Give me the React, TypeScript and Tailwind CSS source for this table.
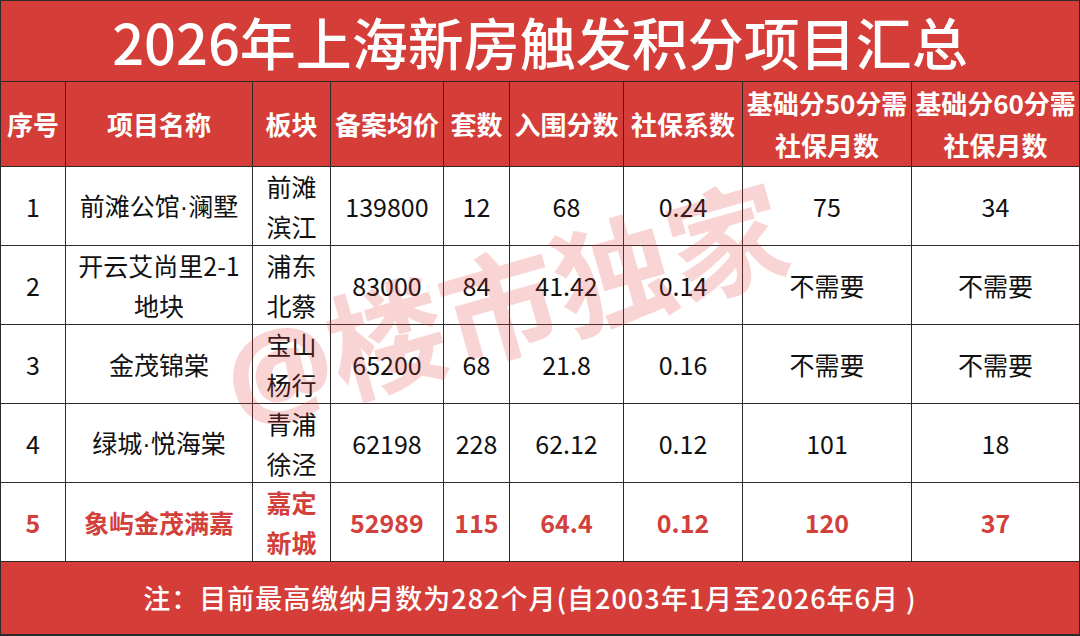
import React from 'react'

type Row = {
  no: string
  name: React.ReactNode
  area: React.ReactNode
  price: string
  units: string
  score: string
  coef: string
  m50: string
  m60: string
  highlight?: boolean
}

// narrow middle dot, the CJK font draws it full width
const Dot = () => <span className="font-['Liberation_Sans',sans-serif]">·</span>

const rows: Row[] = [
  { no: '1', name: <>前滩公馆<Dot />澜墅</>, area: <>前滩<br />滨江</>, price: '139800', units: '12', score: '68', coef: '0.24', m50: '75', m60: '34' },
  { no: '2', name: <>开云艾尚里2-1<br />地块</>, area: <>浦东<br />北蔡</>, price: '83000', units: '84', score: '41.42', coef: '0.14', m50: '不需要', m60: '不需要' },
  { no: '3', name: '金茂锦棠', area: <>宝山<br />杨行</>, price: '65200', units: '68', score: '21.8', coef: '0.16', m50: '不需要', m60: '不需要' },
  { no: '4', name: <>绿城<Dot />悦海棠</>, area: <>青浦<br />徐泾</>, price: '62198', units: '228', score: '62.12', coef: '0.12', m50: '101', m60: '18' },
  { no: '5', name: '象屿金茂满嘉', area: <>嘉定<br />新城</>, price: '52989', units: '115', score: '64.4', coef: '0.12', m50: '120', m60: '37', highlight: true },
]

const headers: React.ReactNode[] = [
  '序号',
  '项目名称',
  '板块',
  '备案均价',
  '套数',
  '入围分数',
  '社保系数',
  <>基础分50分需<br />社保月数</>,
  <>基础分60分需<br />社保月数</>,
]

function Cell({ children, highlight }: { children: React.ReactNode; highlight?: boolean }) {
  return (
    <div
      className={
        highlight
          ? 'bg-white flex items-center justify-center text-center leading-[40px] text-[25px] font-bold text-[#d2403b]'
          : 'bg-white flex items-center justify-center text-center leading-[40px] text-[25px] text-[#111]'
      }
    >
      <span>{children}</span>
    </div>
  )
}

export default function App() {
  return (
    <div className="relative w-[1080px] h-[636px] overflow-hidden font-['Noto_Sans_CJK_SC','Noto_Sans',sans-serif]">
      <div className="grid h-full bg-[#2e2a2a] p-px gap-px grid-cols-[64px_186px_77px_112px_65px_113px_118px_168px_167px] grid-rows-[80px_84px_78px_78px_78px_78px_78px_72px]">
        {/* Title */}
        <div className="col-span-9 bg-[#d43d38] flex items-center justify-center text-white text-[56px] font-medium leading-[64px]">
          2026年上海新房触发积分项目汇总
        </div>

        {/* Header row */}
        {headers.map((h, i) => (
          <div
            key={i}
            className="bg-[#d43d38] flex items-center justify-center text-center text-white text-[26px] font-bold leading-[42px] whitespace-nowrap"
          >
            <span>{h}</span>
          </div>
        ))}

        {/* Data rows */}
        {rows.map((r) => (
          <React.Fragment key={r.no}>
            <Cell highlight={r.highlight}>{r.no}</Cell>
            <Cell highlight={r.highlight}>{r.name}</Cell>
            <Cell highlight={r.highlight}>{r.area}</Cell>
            <Cell highlight={r.highlight}>{r.price}</Cell>
            <Cell highlight={r.highlight}>{r.units}</Cell>
            <Cell highlight={r.highlight}>{r.score}</Cell>
            <Cell highlight={r.highlight}>{r.coef}</Cell>
            <Cell highlight={r.highlight}>{r.m50}</Cell>
            <Cell highlight={r.highlight}>{r.m60}</Cell>
          </React.Fragment>
        ))}

        {/* Footer note */}
        <div className="col-span-9 bg-[#d43d38] flex items-center justify-center pr-[20px] text-white text-[27px] font-medium tracking-[1px]">
          注：目前最高缴纳月数为282个月(自2003年1月至2026年6月 )
        </div>
      </div>

      {/* Watermark */}
      <div className="pointer-events-none absolute left-[505px] top-[302px] -translate-x-1/2 -translate-y-1/2 rotate-[-16deg] whitespace-nowrap text-[118px] font-bold leading-none text-[rgba(226,60,60,0.22)]">
        <span className="font-['Noto_Sans',sans-serif] font-black">@</span>楼市独家
      </div>
    </div>
  )
}
